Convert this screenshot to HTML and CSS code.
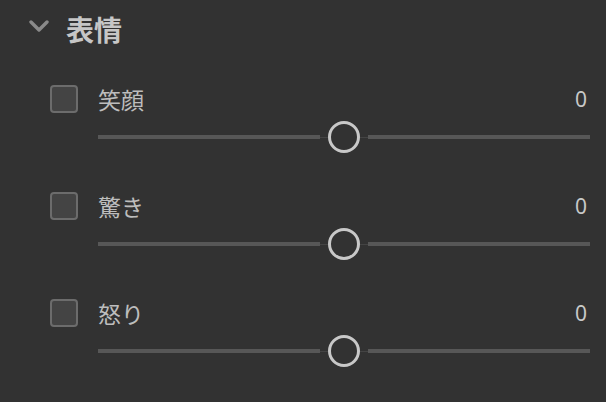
FILE: index.html
```html
<!DOCTYPE html>
<html>
<head>
  <meta charset="utf-8">
  <title>表情</title>
  <link rel="stylesheet" href="styles.css">
</head>
<body>
  <header class="panel__header">
    <svg class="chevron" width="20" height="12" viewBox="0 0 20 12">
      <polyline points="2,2 10,10 18,2" fill="none" stroke="#8a8a8a" stroke-width="3.4" stroke-linecap="round" stroke-linejoin="round"/>
    </svg>
    <h1>表情</h1>
  </header>
  <section class="panel__body">
    <div class="row">
      <span class="check"></span>
      <div class="row__main">
        <div class="row__head">
          <span class="label">笑顔</span>
          <span class="value">0</span>
        </div>
        <div class="slider">
          <span class="track"></span>
          <span class="gap"></span>
          <span class="thumb"></span>
          <span class="gap"></span>
          <span class="track"></span>
        </div>
      </div>
    </div>
    <div class="row">
      <span class="check"></span>
      <div class="row__main">
        <div class="row__head">
          <span class="label">驚き</span>
          <span class="value">0</span>
        </div>
        <div class="slider">
          <span class="track"></span>
          <span class="gap"></span>
          <span class="thumb"></span>
          <span class="gap"></span>
          <span class="track"></span>
        </div>
      </div>
    </div>
    <div class="row">
      <span class="check"></span>
      <div class="row__main">
        <div class="row__head">
          <span class="label">怒り</span>
          <span class="value">0</span>
        </div>
        <div class="slider">
          <span class="track"></span>
          <span class="gap"></span>
          <span class="thumb"></span>
          <span class="gap"></span>
          <span class="track"></span>
        </div>
      </div>
    </div>
  </section>
</body>
</html>
```
FILE: styles.css
```css
body {
  margin: 0;
  background: #323232;
  color: #c4c4c4;
  font-family: "Noto Sans CJK JP", "Noto Sans", sans-serif;
  height: 402px;
  overflow: hidden;
}

.panel__header {
  display: flex;
  align-items: center;
  height: 58px;
  padding-left: 29px;
}

.chevron {
  display: block;
  margin-top: -6px;
}

h1 {
  margin: 0 0 0 17px;
  font-size: 28px;
  line-height: 30px;
  font-weight: 700;
  color: #c6c6c6;
}

.panel__body {
  padding: 27px 16px 0 50px;
}

.row {
  display: flex;
  align-items: flex-start;
  margin-bottom: 39px;
}

.check {
  flex: none;
  width: 24px;
  height: 24px;
  border: 2px solid #6c6c6c;
  border-radius: 4px;
  background: #444444;
}

.row__main {
  flex: 1;
  margin-left: 20px;
}

.row__head {
  display: flex;
  justify-content: space-between;
  align-items: center;
  height: 28px;
}

.label {
  font-size: 23px;
  line-height: 28px;
  color: #bdbdbd;
}

.value {
  font-family: "Noto Sans", sans-serif;
  font-size: 21px;
  line-height: 28px;
  color: #c8c8c8;
  padding-right: 3px;
}

.slider {
  display: flex;
  align-items: center;
  height: 32px;
  margin-top: 8px;
}

.track {
  flex: 1;
  height: 4px;
  background: #575757;
}

.gap {
  width: 8px;
  height: 1px;
  background: #444444;
}

.thumb {
  flex: none;
  width: 26px;
  height: 26px;
  border: 3px solid #c8c8c8;
  border-radius: 50%;
}
```
